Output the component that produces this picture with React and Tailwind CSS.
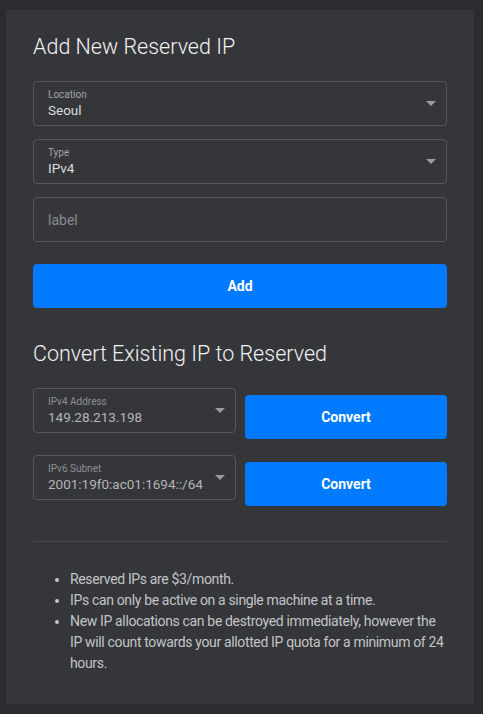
import React from 'react';

function Caret() {
    return (
        <svg width="10" height="5" viewBox="0 0 10 5" className="shrink-0">
            <path d="M0 0 L10 0 L5 5 Z" fill="#9b9c9f" />
        </svg>
    );
}

function SelectBox({ label, value, className = '', dim = false }) {
    return (
        <div className={`h-[45px] rounded border border-[#55565a] flex items-center pl-[14px] pr-[10px] ${className}`}>
            <div className="flex-1 min-w-0 flex flex-col pt-[1px]">
                <span className={`text-[10px] leading-[12px] ${dim ? 'text-[#8e8f92]' : 'text-[#a3a4a7]'}`}>{label}</span>
                <span className={`text-[13.5px] leading-[19px] whitespace-nowrap ${dim ? 'text-[#b4b5b8]' : 'text-[#dcdcde]'}`}>{value}</span>
            </div>
            <Caret />
        </div>
    );
}

export default function App() {
    return (
        <div className="min-h-screen bg-[#2b2c30] pt-[10px] pl-[6px] pr-[9px] pb-[12px]" style={{ fontFamily: 'Roboto, "Liberation Sans", sans-serif' }}>
            <div className="bg-[#35363a] px-[27px] pt-[22px] pb-[30px]">
                <h2 className="text-[21.5px] leading-[30px] font-light text-[#f2f2f3]">Add New Reserved IP</h2>

                <div className="mt-[19px] flex flex-col gap-[13px]">
                    <SelectBox label="Location" value="Seoul" />
                    <SelectBox label="Type" value="IPv4" />
                    <div className="h-[45px] rounded border border-[#55565a] flex items-center px-[14px] pt-[2px]">
                        <span className="text-[14px] text-[#8a8b8e]">label</span>
                    </div>
                </div>

                <button className="mt-[22px] w-full h-[44px] rounded-sm bg-[#007bff] text-white text-[14px] font-bold">Add</button>

                <h2 className="mt-[31px] text-[21.5px] leading-[30px] font-light text-[#f2f2f3]">Convert Existing IP to Reserved</h2>

                <div className="mt-[19px] flex flex-col gap-[16px]">
                    <div className="flex gap-[9px]">
                        <SelectBox label="IPv4 Address" value="149.28.213.198" className="w-[203px] shrink-0" dim />
                        <button className="flex-1 mt-[7px] h-[44px] rounded-sm bg-[#007bff] text-white text-[14px] font-bold">Convert</button>
                    </div>
                    <div className="flex gap-[9px]">
                        <SelectBox label="IPv6 Subnet" value="2001:19f0:ac01:1694::/64" className="w-[203px] shrink-0" dim />
                        <button className="flex-1 mt-[7px] h-[44px] rounded-sm bg-[#007bff] text-white text-[14px] font-bold">Convert</button>
                    </div>
                </div>

                <div className="mt-[35px] border-t border-[#4a4b4f]" />

                <ul className="mt-[27px] pl-[37px] list-disc text-[14px] leading-[21px] text-[#c3c4c7] marker:text-[#c3c4c7] tracking-[-0.35px]">
                    <li>Reserved IPs are $3/month.</li>
                    <li>IPs can only be active on a single machine at a time.</li>
                    <li>New IP allocations can be destroyed immediately, however the IP will count towards your allotted IP quota for a minimum of 24 hours.</li>
                </ul>
            </div>
        </div>
    );
}
